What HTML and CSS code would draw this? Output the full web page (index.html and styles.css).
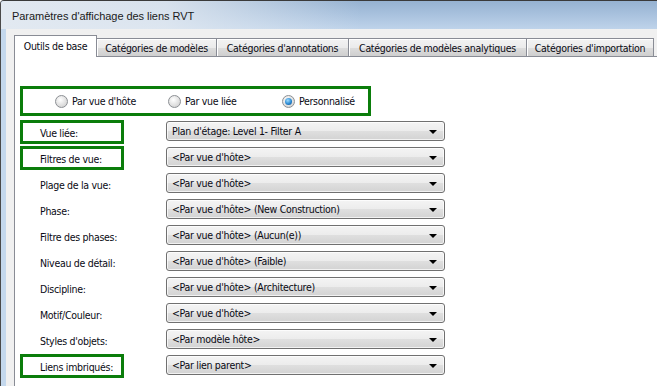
FILE: index.html
```html
<!DOCTYPE html>
<html lang="fr">
<head>
<meta charset="utf-8">
<title>Paramètres d'affichage des liens RVT</title>
<link rel="stylesheet" href="styles.css">
</head>
<body>
<div class="window">
  <div class="titlebar"><span class="title">Paramètres d'affichage des liens RVT</span></div>
  <div class="frame">
    <div class="client">
      <div class="tabs">
        <div class="tab active t1">Outils de base</div>
        <div class="tab t2">Catégories de modèles</div>
        <div class="tab t3">Catégories d'annotations</div>
        <div class="tab t4">Catégories de modèles analytiques</div>
        <div class="tab t5">Catégories d'importation</div>
      </div>
      <div class="panel">
        <div class="radio-group hl">
          <label class="radio"><span class="dot"></span>Par vue d'hôte</label>
          <label class="radio"><span class="dot"></span>Par vue liée</label>
          <label class="radio"><span class="dot on"></span>Personnalisé</label>
        </div>
        <div class="rows">
          <div class="lbl hl">Vue liée:</div>
          <div class="combo"><span>Plan d'étage: Level 1- Filter A</span><i class="arrow"></i></div>

          <div class="lbl hl">Filtres de vue:</div>
          <div class="combo"><span>&lt;Par vue d'hôte&gt;</span><i class="arrow"></i></div>

          <div class="lbl">Plage de la vue:</div>
          <div class="combo"><span>&lt;Par vue d'hôte&gt;</span><i class="arrow"></i></div>

          <div class="lbl">Phase:</div>
          <div class="combo"><span>&lt;Par vue d'hôte&gt; (New Construction)</span><i class="arrow"></i></div>

          <div class="lbl">Filtre des phases:</div>
          <div class="combo"><span>&lt;Par vue d'hôte&gt; (Aucun(e))</span><i class="arrow"></i></div>

          <div class="lbl">Niveau de détail:</div>
          <div class="combo"><span>&lt;Par vue d'hôte&gt; (Faible)</span><i class="arrow"></i></div>

          <div class="lbl">Discipline:</div>
          <div class="combo"><span>&lt;Par vue d'hôte&gt; (Architecture)</span><i class="arrow"></i></div>

          <div class="lbl">Motif/Couleur:</div>
          <div class="combo"><span>&lt;Par vue d'hôte&gt;</span><i class="arrow"></i></div>

          <div class="lbl">Styles d'objets:</div>
          <div class="combo"><span>&lt;Par modèle hôte&gt;</span><i class="arrow"></i></div>

          <div class="lbl hl">Liens imbriqués:</div>
          <div class="combo"><span>&lt;Par lien parent&gt;</span><i class="arrow"></i></div>
        </div>
      </div>
    </div>
  </div>
</div>
</body>
</html>
```
FILE: styles.css
```css
* { box-sizing: border-box; }
html, body { margin: 0; padding: 0; }
body {
  width: 657px;
  height: 386px;
  overflow: hidden;
  font-family: "DejaVu Sans Condensed", "DejaVu Sans", sans-serif;
  font-stretch: condensed;
  font-size: 10.5px;
  letter-spacing: -0.3px;
  color: #0a0a14;
  background: #fff;
}
.window {
  width: 657px;
  height: 386px;
  border-top: 1px solid #3a3a3a;
  border-left: 1px solid #4a4a4a;
  border-top-left-radius: 4px;
  background: #c4d8ed;
  display: flex;
  flex-direction: column;
  overflow: hidden;
}
.titlebar {
  height: 28px;
  flex: none;
  display: flex;
  align-items: center;
  padding-left: 11px;
  padding-top: 1px;
  background:
    linear-gradient(to right, rgba(226, 233, 241, 1) 0%, rgba(226, 233, 241, 0.85) 25%, rgba(226, 233, 241, 0) 55%),
    linear-gradient(to bottom, #96b2d1 0%, #a9c2de 50%, #bed3ea 100%);
}
.title {
  font-family: "Liberation Sans", Arial, sans-serif;
  font-stretch: normal;
  font-size: 11px;
  letter-spacing: -0.05px;
  color: #1a1a1a;
}
.frame {
  flex: 1;
  padding-left: 5px;
  display: flex;
}
.client {
  flex: 1;
  background: #f0f0f0;
  padding: 6px 0 0 8px;
  display: flex;
  flex-direction: column;
}
.tabs {
  display: flex;
  align-items: flex-end;
  height: 21px;
  position: relative;
  z-index: 1;
}
.tab {
  flex: none;
  height: 18px;
  display: flex;
  align-items: center;
  justify-content: center;
  border: 1px solid #898c95;
  border-bottom: none;
  margin-right: -1px;
  background: linear-gradient(to bottom, #f3f3f3 0%, #ebebeb 50%, #dddddd 51%, #cfcfcf 100%);
  box-shadow: inset 1px 1px 0 #fff;
  white-space: nowrap;
}
.t1 { width: 83px; }
.t2 { width: 121px; }
.t3 { width: 133px; }
.t4 { width: 179px; }
.t5 { width: 128px; }
.tab.active {
  height: 22px;
  margin-bottom: -1px;
  background: #fff;
  box-shadow: none;
  padding-bottom: 2px;
}
.panel {
  flex: 1;
  background: #fff;
  border-top: 1px solid #898c95;
  border-left: 1px solid #898c95;
  padding: 29px 0 0 5px;
}
.hl {
  border: 3px solid #0b7d0b;
}
.radio-group {
  width: 351px;
  height: 30px;
  display: flex;
  align-items: center;
  padding-left: 32px;
}
.radio {
  display: flex;
  align-items: center;
  gap: 4px;
}
.radio:nth-child(1) { width: 113px; }
.radio:nth-child(2) { width: 114px; }
.dot {
  width: 13px;
  height: 13px;
  border-radius: 50%;
  border: 1px solid #8c8f94;
  background: radial-gradient(circle at 40% 35%, #ffffff 0%, #e6e6e6 45%, #c9c9c9 100%);
  position: relative;
  display: inline-block;
}
.dot.on::after {
  content: "";
  position: absolute;
  left: 2px;
  top: 2px;
  width: 7px;
  height: 7px;
  border-radius: 50%;
  background: radial-gradient(circle at 40% 35%, #9fdcff 0%, #2a8ad4 55%, #0b3f7a 100%);
}
.rows {
  margin-top: 4px;
  display: grid;
  grid-template-columns: 104px 279px;
  grid-auto-rows: 26px;
  column-gap: 42px;
}
.lbl {
  height: 24px;
  width: 104px;
  display: flex;
  align-items: center;
  padding-left: 20px;
  padding-top: 2px;
  white-space: nowrap;
}
.lbl.hl { padding-left: 17px; }
.combo {
  margin-top: 1px;
  height: 20px;
  border: 1px solid #707070;
  border-radius: 3px;
  background: linear-gradient(to bottom, #f4f4f4 0%, #ececec 50%, #dfdfdf 51%, #d3d3d3 100%);
  box-shadow: inset 0 0 0 1px rgba(255, 255, 255, 0.7);
  display: flex;
  align-items: center;
  justify-content: space-between;
  padding: 0 7px 0 5px;
  white-space: nowrap;
}
.arrow {
  width: 0;
  height: 0;
  border-left: 4px solid transparent;
  border-right: 4px solid transparent;
  border-top: 4px solid #000;
  margin-top: 2px;
}
```
